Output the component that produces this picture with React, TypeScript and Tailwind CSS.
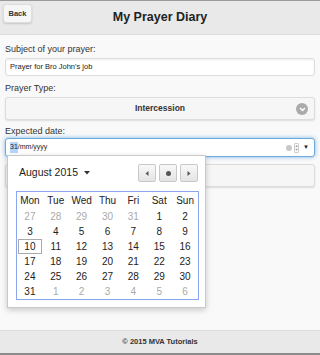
import React from 'react';

const days = ['Mon', 'Tue', 'Wed', 'Thu', 'Fri', 'Sat', 'Sun'];

const weeks: { d: number; muted?: boolean }[][] = [
  [27, 28, 29, 30, 31].map((d) => ({ d, muted: true })).concat([{ d: 1 }, { d: 2 }]),
  [3, 4, 5, 6, 7, 8, 9].map((d) => ({ d })),
  [10, 11, 12, 13, 14, 15, 16].map((d) => ({ d })),
  [17, 18, 19, 20, 21, 22, 23].map((d) => ({ d })),
  [24, 25, 26, 27, 28, 29, 30].map((d) => ({ d })),
  [{ d: 31 }].concat([1, 2, 3, 4, 5, 6].map((d) => ({ d, muted: true }))),
];

function NavButton({ children }: { children: React.ReactNode }) {
  return (
    <div className="w-[18px] h-[18px] flex items-center justify-center rounded-[2px] border border-[#c8c8c8] bg-gradient-to-b from-[#f8f8f8] to-[#e4e4e4] text-[#555]">
      {children}
    </div>
  );
}

export default function App() {
  return (
    <div
      className="w-[320px] h-[355px] flex flex-col bg-[#f9f9f9] text-[#333] overflow-hidden"
      style={{ fontFamily: '"Liberation Sans", Arial, sans-serif' }}
    >
      {/* header */}
      <div className="h-[35px] shrink-0 grid grid-cols-[1fr_auto_1fr] items-center bg-[#e9e9e9] border-t border-[#9a9a9a] border-b border-b-[#dddddd]">
        <div className="pl-[3px] self-start pt-[3px]">
          <div className="w-[29px] h-[19px] flex items-center justify-center rounded-[3px] bg-[#f6f6f6] border border-[#dddddd] shadow-[0_1px_2px_rgba(0,0,0,0.15)] text-[7.5px] font-bold text-[#333]">
            Back
          </div>
        </div>
        <h1 className="text-[12.5px] font-bold text-[#222] pb-[1px]">My Prayer Diary</h1>
        <div />
      </div>

      {/* content */}
      <div className="relative flex-1 px-[5px] pt-[8px]">
        <div className="text-[9px] text-[#333] leading-[12px]">Subject of your prayer:</div>
        <div className="mt-[3px] h-[18px] flex items-center px-[4px] bg-white border border-[#dddddd] rounded-[3px] shadow-[inset_0_1px_2px_rgba(0,0,0,0.08)] text-[7.5px] text-[#222]">
          Prayer for Bro John's job
        </div>

        <div className="mt-[6px] text-[9px] leading-[12px]">Prayer Type:</div>
        <div className="mt-[3px] h-[23px] relative flex items-center justify-center bg-[#f6f6f6] border border-[#dddddd] rounded-[3px] shadow-[0_1px_2px_rgba(0,0,0,0.12)] text-[8.5px] font-bold text-[#333]">
          Intercession
          <span className="absolute right-[6px] top-[5px] w-[12px] h-[12px] rounded-full bg-[#aaaaaa] flex items-center justify-center">
            <svg width="7" height="5" viewBox="0 0 7 5">
              <path d="M1 1 L3.5 3.5 L6 1" stroke="#fff" strokeWidth="1.5" fill="none" />
            </svg>
          </span>
        </div>

        <div className="mt-[5px] text-[9px] leading-[12px]">Expected date:</div>
        <div className="mt-[1px] h-[19px] flex items-center pl-[4px] pr-[5px] bg-white border border-[#6fa8dc] rounded-[3px] shadow-[0_0_4px_#7fb8ea] text-[7px] text-[#222]">
          <span className="bg-[#b3d4fc]">31</span>
          <span>/mm/yyyy</span>
          <span className="ml-auto flex items-center gap-[2px]">
            <span className="w-[6px] h-[6px] rounded-full bg-[#c8c8c8]" />
            <span className="flex flex-col items-center justify-center w-[5px] h-[10px] border border-[#ccc] rounded-[1px] text-[#999] text-[4px] leading-[4px]">
              <span>▲</span>
              <span>▼</span>
            </span>
            <span className="text-[6px] text-[#222] ml-[2px]">▼</span>
          </span>
        </div>

        <div className="mt-[7px] h-[23px] bg-[#f6f6f6] border border-[#dddddd] rounded-[3px] shadow-[0_1px_2px_rgba(0,0,0,0.12)]" />

        {/* date picker popup */}
        <div className="absolute left-[7px] top-[120px] w-[199px] h-[153px] bg-white border border-[#c9c9c9] shadow-[0_2px_6px_rgba(0,0,0,0.2)] px-[8px] pt-[8px]">
          <div className="flex items-center justify-between pl-[3px]">
            <div className="flex items-center gap-[6px] text-[10.5px] text-[#222]">
              August 2015
              <svg width="6" height="4" viewBox="0 0 6 4">
                <path d="M0 0 L6 0 L3 3.5 Z" fill="#333" />
              </svg>
            </div>
            <div className="flex gap-[3px] mr-[-1px]">
              <NavButton>
                <svg width="4" height="5" viewBox="0 0 4 5">
                  <path d="M3.5 0 L0.5 2.5 L3.5 5 Z" fill="#555" />
                </svg>
              </NavButton>
              <NavButton>
                <span className="w-[5px] h-[5px] rounded-full bg-[#555]" />
              </NavButton>
              <NavButton>
                <svg width="4" height="5" viewBox="0 0 4 5">
                  <path d="M0.5 0 L3.5 2.5 L0.5 5 Z" fill="#555" />
                </svg>
              </NavButton>
            </div>
          </div>

          <div className="mt-[9px] border border-[#8aa6ee] w-[183px]">
            <div className="grid grid-cols-7 h-[17px] items-center bg-white text-[10px] text-[#222]">
              {days.map((d) => (
                <div key={d} className="text-center">{d}</div>
              ))}
            </div>
            {weeks.map((w, i) => (
              <div key={i} className="grid grid-cols-7 h-[15px] items-center text-[10px]">
                {w.map((c, j) => (
                  <div
                    key={j}
                    className={`text-center leading-[13px] ${c.muted ? 'text-[#aaaaaa]' : 'text-[#222]'} ${
                      c.d === 10 && !c.muted ? 'border border-[#aaaaaa] mx-[1px]' : ''
                    }`}
                  >
                    {c.d}
                  </div>
                ))}
              </div>
            ))}
          </div>
        </div>
      </div>

      {/* footer */}
      <div className="h-[25px] shrink-0 flex items-center justify-center bg-[#e9e9e9] border-t border-[#dddddd] border-b-[2px] border-b-[#8c8c8c] text-[7.5px] font-bold text-[#333]">
        © 2015 MVA Tutorials
      </div>
    </div>
  );
}
